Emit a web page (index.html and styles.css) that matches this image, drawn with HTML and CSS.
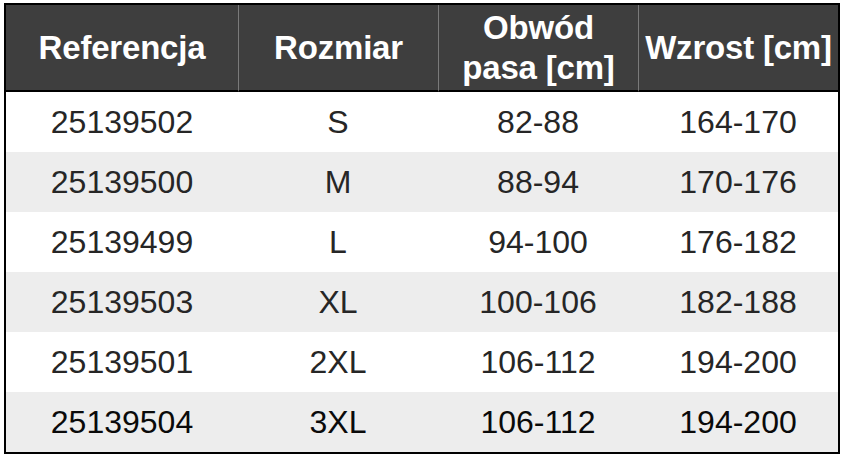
FILE: index.html
```html
<!DOCTYPE html>
<html lang="pl">
<head>
<meta charset="utf-8">
<title>Tabela rozmiarów</title>
<link rel="stylesheet" href="styles.css">
</head>
<body>
<div class="page">
  <table class="sizes">
    <colgroup>
      <col class="c-ref">
      <col class="c-size">
      <col class="c-waist">
      <col class="c-height">
    </colgroup>
    <thead>
      <tr>
        <th>Referencja</th>
        <th class="sep">Rozmiar</th>
        <th class="sep">Obwód<br>pasa [cm]</th>
        <th class="sep">Wzrost [cm]</th>
      </tr>
    </thead>
    <tbody>
      <tr><td>25139502</td><td>S</td><td>82-88</td><td>164-170</td></tr>
      <tr class="alt"><td>25139500</td><td>M</td><td>88-94</td><td>170-176</td></tr>
      <tr><td>25139499</td><td>L</td><td>94-100</td><td>176-182</td></tr>
      <tr class="alt"><td>25139503</td><td>XL</td><td>100-106</td><td>182-188</td></tr>
      <tr><td>25139501</td><td>2XL</td><td>106-112</td><td>194-200</td></tr>
      <tr class="alt last"><td>25139504</td><td>3XL</td><td>106-112</td><td>194-200</td></tr>
    </tbody>
  </table>
</div>
</body>
</html>
```

FILE: styles.css
```css
html, body {
  margin: 0;
  padding: 0;
  background: #ffffff;
}

.page {
  padding: 3px 0 0 4px;
}

.sizes {
  width: 836px;
  table-layout: fixed;
  border-collapse: separate;
  border-spacing: 0;
  border: 2px solid #000000;
  font-family: "Liberation Sans", Arial, sans-serif;
  text-align: center;
}

.c-ref { width: 232px; }
.c-size { width: 200px; }
.c-waist { width: 200px; }
.c-height { width: 200px; }

.sizes th {
  height: 85px;
  padding: 0;
  background: #3e3e3e;
  color: #ffffff;
  font-size: 33px;
  font-weight: bold;
  line-height: 40px;
  letter-spacing: -0.2px;
  border-bottom: 2px solid #000000;
  vertical-align: middle;
}

.sizes th.sep {
  border-left: 1px solid #7a7a7a;
}

.sizes td {
  height: 60px;
  padding: 0;
  font-size: 32px;
  color: #262626;
  vertical-align: middle;
  background: #ffffff;
}

.sizes tr.alt td {
  background: #ededed;
}

.sizes tr.last td {
  color: #0a0a0a;
}
```
